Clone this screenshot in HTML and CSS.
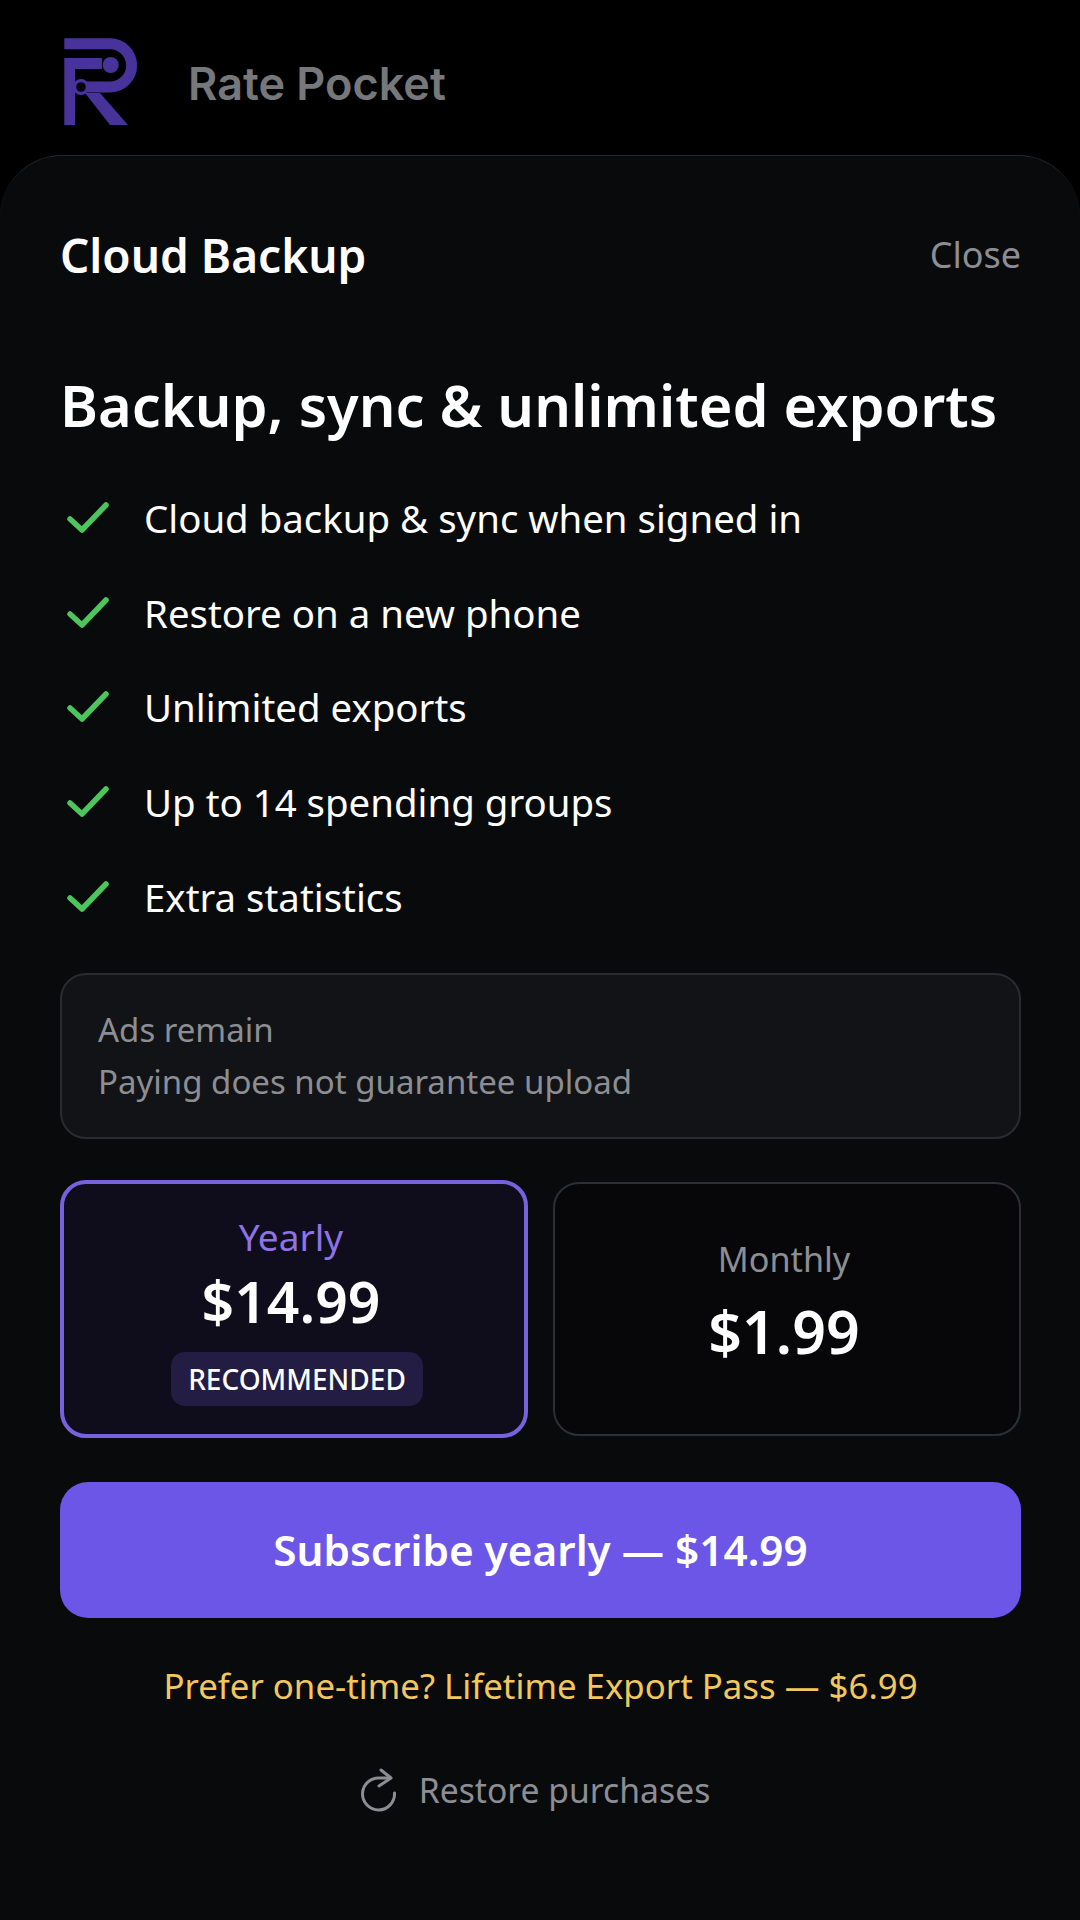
FILE: index.html
```html
<!DOCTYPE html>
<html lang="en">
<head>
  <meta charset="UTF-8" />
  <meta name="viewport" content="width=device-width, initial-scale=1.0"/>
  <title>Cloud Backup</title>
  <link rel="stylesheet" href="styles.css">
</head>
<body>

<header class="brand">
  <svg class="brand-logo" viewBox="14 8 74 88" width="74" height="88">
    <path d="M14.300 13.800 H60 A21.600 21.600 0 0 1 60 57 H36" fill="none" stroke="#47339a" stroke-width="11"/>
    <path d="M14.300 28 H52 V39 H25 V95 H14.300 Z" fill="#47339a"/>
    <circle cx="60.700" cy="35" r="8" fill="#47339a"/>
    <circle cx="31" cy="57" r="8" fill="#47339a"/>
    <circle cx="31" cy="57" r="4.800" fill="#06060a"/>
    <path d="M35 63 H50 L78 95 H60 Z" fill="#47339a"/>
  </svg>
  <span class="brand-name">Rate Pocket</span>
</header>

<main class="sheet">
  <div class="sheet-head">
    <h2 class="sheet-title">Cloud Backup</h2>
    <a class="close" href="#">Close</a>
  </div>

  <h1 class="headline">Backup, sync &amp; unlimited exports</h1>

  <ul class="features">
    <li><svg class="check" viewBox="0 0 42 32" width="42" height="32"><path d="M3 17 L15 28 L39 3" fill="none" stroke="#4cc65c" stroke-width="5.500" stroke-linecap="round" stroke-linejoin="round"/></svg>Cloud backup &amp; sync when signed in</li>
    <li><svg class="check" viewBox="0 0 42 32" width="42" height="32"><path d="M3 17 L15 28 L39 3" fill="none" stroke="#4cc65c" stroke-width="5.500" stroke-linecap="round" stroke-linejoin="round"/></svg>Restore on a new phone</li>
    <li><svg class="check" viewBox="0 0 42 32" width="42" height="32"><path d="M3 17 L15 28 L39 3" fill="none" stroke="#4cc65c" stroke-width="5.500" stroke-linecap="round" stroke-linejoin="round"/></svg>Unlimited exports</li>
    <li><svg class="check" viewBox="0 0 42 32" width="42" height="32"><path d="M3 17 L15 28 L39 3" fill="none" stroke="#4cc65c" stroke-width="5.500" stroke-linecap="round" stroke-linejoin="round"/></svg>Up to 14 spending groups</li>
    <li><svg class="check" viewBox="0 0 42 32" width="42" height="32"><path d="M3 17 L15 28 L39 3" fill="none" stroke="#4cc65c" stroke-width="5.500" stroke-linecap="round" stroke-linejoin="round"/></svg>Extra statistics</li>
  </ul>

  <div class="notice">
    <p>Ads remain</p>
    <p>Paying does not guarantee upload</p>
  </div>

  <div class="plans">
    <div class="plan plan-active">
      <div class="plan-name">Yearly</div>
      <div class="plan-price">$14.99</div>
      <div class="plan-badge">RECOMMENDED</div>
    </div>
    <div class="plan">
      <div class="plan-name">Monthly</div>
      <div class="plan-price">$1.99</div>
    </div>
  </div>

  <button class="subscribe">Subscribe yearly — $14.99</button>

  <a class="lifetime" href="#">Prefer one-time? Lifetime Export Pass — $6.99</a>

  <a class="restore" href="#">
    <svg viewBox="0 0 36 44" width="36" height="44">
      <path d="M29 10 H19 A16 16 0 1 0 33.500 25" fill="none" stroke="#8d8e94" stroke-width="3" stroke-linecap="round"/>
      <path d="M20 2 L30 10 L18 18" fill="none" stroke="#8d8e94" stroke-width="3" stroke-linecap="round" stroke-linejoin="round"/>
    </svg>
    Restore purchases
  </a>
</main>

</body>
</html>
```

FILE: styles.css
```css
* {
  box-sizing: border-box;
}
html, body {
  height: 100%;
}
body {
  margin: 0;
  background: #000;
  color: #fff;
  font-family: "Noto Sans", "Open Sans", sans-serif;
  display: flex;
  flex-direction: column;
}
a {
  text-decoration: none;
}
.brand {
  height: 155px;
  padding: 38px 0 0 64px;
  display: flex;
  align-items: flex-start;
  gap: 50px;
}
.brand-name {
  margin-top: 20px;
  color: #77787c;
  font-family: Inter, sans-serif;
  font-size: 45px;
  font-weight: 600;
  line-height: 52px;
}
.sheet {
  flex: 1;
  background: #090a0c;
  border-top: 1px solid #26272b;
  border-radius: 62px 62px 0 0;
  padding: 0 59px 0 60px;
  display: flex;
  flex-direction: column;
}
.sheet-head {
  margin-top: 72px;
  display: flex;
  justify-content: space-between;
  align-items: center;
}
.sheet-title {
  margin: 0;
  font-size: 46px;
  font-weight: 600;
  line-height: 54px;
}
.close {
  color: #8d8e94;
  font-size: 36px;
  line-height: 54px;
}
.headline {
  margin: 85px 0 0;
  font-size: 57.700px;
  font-weight: 600;
  line-height: 76px;
  white-space: nowrap;
}
.features {
  list-style: none;
  margin: 28px 0 0;
  padding: 0;
}
.features li {
  height: 94.6px;
  display: flex;
  align-items: center;
  gap: 35px;
  padding-left: 7px;
  font-size: 38.4px;
}
.notice {
  margin-top: 29px;
  height: 166px;
  padding: 0 36px;
  background: #111316;
  border: 2px solid #2a2b2f;
  border-radius: 26px;
  display: flex;
  flex-direction: column;
  justify-content: center;
  gap: 6px;
  color: #8d8e94;
  font-size: 33px;
  line-height: 46px;
}
.notice p {
  margin: 0;
}
.plans {
  margin-top: 41px;
  display: grid;
  grid-template-columns: 1fr 1fr;
  gap: 25px;
  align-items: center;
}
.plan {
  height: 254px;
  padding-bottom: 14px;
  padding-right: 6px;
  background: #07070a;
  border: 2px solid #2e2f33;
  border-radius: 26px;
  display: flex;
  flex-direction: column;
  align-items: center;
  justify-content: center;
  gap: 8px;
}
.plan-active {
  height: 258px;
  padding-bottom: 0;
  background: #0f0d1b;
  border: 4px solid #7761dc;
  gap: 0;
}
.plan-name {
  color: #8d8e94;
  font-size: 34.200px;
  line-height: 50px;
}
.plan-active .plan-name {
  color: #8d73e6;
  font-size: 37px;
}
.plan-price {
  font-size: 59px;
  font-weight: 600;
  line-height: 78px;
}
.plan-active .plan-price {
  font-size: 57px;
}
.plan-badge {
  margin: 12px 0 0 12px;
  height: 54px;
  padding: 0 17px;
  background: #231c43;
  border-radius: 14px;
  font-size: 28px;
  font-weight: 500;
  line-height: 54px;
}
.subscribe {
  margin-top: 44px;
  height: 136px;
  border: none;
  border-radius: 28px;
  background: #6b56e8;
  color: #fff;
  font-family: inherit;
  font-size: 42.300px;
  font-weight: 600;
  cursor: pointer;
}
.lifetime {
  margin-top: 44px;
  color: #f2c75c;
  font-size: 34.800px;
  line-height: 48px;
  text-align: center;
}
.restore {
  margin-top: 56px;
  padding-right: 10px;
  display: flex;
  justify-content: center;
  align-items: center;
  gap: 22px;
  color: #8d8e94;
  font-size: 33.700px;
  line-height: 48px;
}
```
